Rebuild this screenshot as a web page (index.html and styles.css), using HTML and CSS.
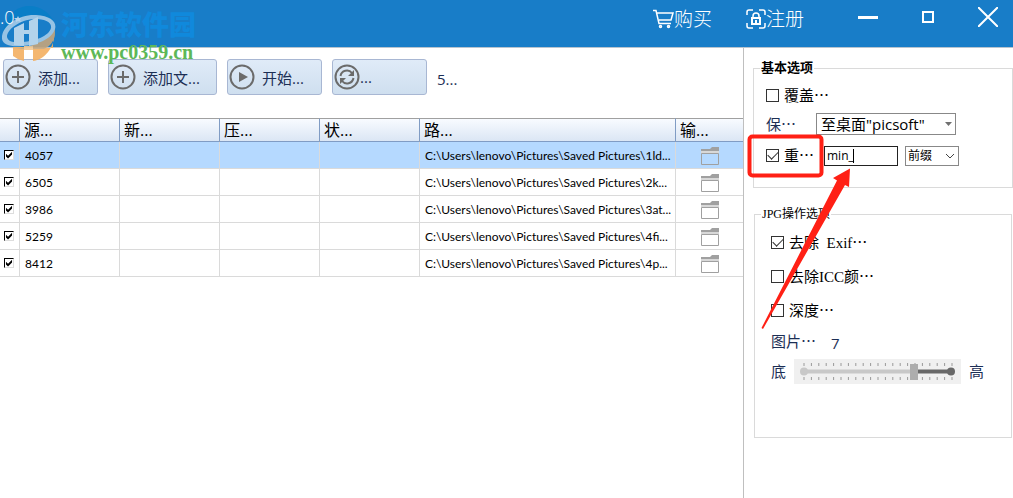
FILE: index.html
```html
<!DOCTYPE html>
<html lang="zh-CN">
<head>
<meta charset="utf-8">
<title>图片压缩</title>
<link rel="stylesheet" href="styles.css">
</head>
<body>
<div class="app">
  <header class="titlebar">
    <span class="version">.0</span>
    <nav class="account">
      <button class="title-btn" type="button">
        <svg width="21" height="20" viewBox="0 0 21 20" fill="none" stroke="#fff" stroke-width="1.5"><path d="M0 1.500h3l3 13h12M4 4h16l-2 7H6"/><circle cx="7.500" cy="17.500" r="1"/><circle cx="15.500" cy="17.500" r="1"/></svg>购买
      </button>
      <button class="title-btn" type="button">
        <svg width="20" height="20" viewBox="0 0 20 20" fill="none" stroke="#fff" stroke-width="1.500"><path d="M1 6V3q0-2 2-2h4M13 1h4q2 0 2 2v3M19 14v3q0 2-2 2h-4M7 19H3q-2 0-2-2v-3"/><path d="M7 9V7a3 3 0 0 1 6 0v2"/><path d="M6 9h8v6H6zM10 11v3" stroke-width="2"/></svg>注册
      </button>
    </nav>
    <div class="window-controls">
      <button class="win-btn" type="button" aria-label="最小化"><svg width="20" height="20" viewBox="0 0 20 20"><path d="M0 10.500h20" stroke="#fff" stroke-width="3"/></svg></button>
      <button class="win-btn" type="button" aria-label="最大化"><svg width="12" height="12" viewBox="0 0 12 12"><path d="M1 1h10v10H1z" fill="none" stroke="#fff" stroke-width="2"/></svg></button>
      <button class="win-btn" type="button" aria-label="关闭"><svg width="20" height="20" viewBox="0 0 20 20"><path d="M0 0l20 20M20 0L0 20" stroke="#fff" stroke-width="2"/></svg></button>
    </div>
  </header>

  <div class="content">
    <main class="files">
      <div class="toolbar">
        <button class="tool" type="button"><svg class="tool-icon" viewBox="0 0 26 26"><circle cx="13" cy="13" r="11.500"/><path d="M13 7v12M7 13h12"/></svg>添加...</button>
        <button class="tool tool-wide" type="button"><svg class="tool-icon" viewBox="0 0 26 26"><circle cx="13" cy="13" r="11.500"/><path d="M13 7v12M7 13h12"/></svg>添加文...</button>
        <button class="tool" type="button"><svg class="tool-icon" viewBox="0 0 26 26"><circle cx="13" cy="13" r="11.500"/><path d="M10 8l9 5-9 5z" fill="#6b6b6b" stroke="none"/></svg>开始...</button>
        <button class="tool tool-tight" type="button"><svg class="tool-icon" viewBox="0 0 26 26"><circle cx="13" cy="13" r="11.500"/><path d="M6.500 12a6.500 6.500 0 0 1 11.500-3M19.500 14A6.500 6.500 0 0 1 8 17"/><path d="M20 6v6h-6zM6 20v-6h6z" fill="#6b6b6b" stroke="none"/></svg>...</button>
        <span class="count">5...</span>
      </div>
      <table class="grid">
        <colgroup><col class="c-check"><col class="c-std"><col class="c-std"><col class="c-std"><col class="c-std"><col class="c-path"><col></colgroup>
        <thead><tr><th></th><th>源...</th><th>新...</th><th>压...</th><th>状...</th><th>路...</th><th>输...</th></tr></thead>
        <tbody>
          <tr class="selected"><td><input class="row-check" type="checkbox" aria-label="4057" checked></td><td>4057</td><td></td><td></td><td></td><td>C:\Users\lenovo\Pictures\Saved Pictures\1ld...</td><td class="out"><svg width="18" height="18" viewBox="0 0 18 18"><path d="M0 2h9l2-2h7v4H0z" fill="#a0a0a0"/><path d="M0 4h18v2H0z" fill="#d8d8d8"/><path d="M.5 6.500h17v11H.5z" fill="none" stroke="#a0a0a0"/></svg></td></tr>
          <tr><td><input class="row-check" type="checkbox" aria-label="6505" checked></td><td>6505</td><td></td><td></td><td></td><td>C:\Users\lenovo\Pictures\Saved Pictures\2k...</td><td class="out"><svg width="18" height="18" viewBox="0 0 18 18"><path d="M0 2h9l2-2h7v4H0z" fill="#a0a0a0"/><path d="M0 4h18v2H0z" fill="#d8d8d8"/><path d="M.5 6.500h17v11H.5z" fill="none" stroke="#a0a0a0"/></svg></td></tr>
          <tr><td><input class="row-check" type="checkbox" aria-label="3986" checked></td><td>3986</td><td></td><td></td><td></td><td>C:\Users\lenovo\Pictures\Saved Pictures\3at...</td><td class="out"><svg width="18" height="18" viewBox="0 0 18 18"><path d="M0 2h9l2-2h7v4H0z" fill="#a0a0a0"/><path d="M0 4h18v2H0z" fill="#d8d8d8"/><path d="M.5 6.500h17v11H.5z" fill="none" stroke="#a0a0a0"/></svg></td></tr>
          <tr><td><input class="row-check" type="checkbox" aria-label="5259" checked></td><td>5259</td><td></td><td></td><td></td><td>C:\Users\lenovo\Pictures\Saved Pictures\4fi...</td><td class="out"><svg width="18" height="18" viewBox="0 0 18 18"><path d="M0 2h9l2-2h7v4H0z" fill="#a0a0a0"/><path d="M0 4h18v2H0z" fill="#d8d8d8"/><path d="M.5 6.500h17v11H.5z" fill="none" stroke="#a0a0a0"/></svg></td></tr>
          <tr><td><input class="row-check" type="checkbox" aria-label="8412" checked></td><td>8412</td><td></td><td></td><td></td><td>C:\Users\lenovo\Pictures\Saved Pictures\4p...</td><td class="out"><svg width="18" height="18" viewBox="0 0 18 18"><path d="M0 2h9l2-2h7v4H0z" fill="#a0a0a0"/><path d="M0 4h18v2H0z" fill="#d8d8d8"/><path d="M.5 6.500h17v11H.5z" fill="none" stroke="#a0a0a0"/></svg></td></tr>
        </tbody>
      </table>
    </main>

    <aside class="options">
      <fieldset class="group basic">
        <legend>基本选项</legend>
        <label class="check-row"><input class="check" type="checkbox"><span>覆盖<span class="dots">…</span></span></label>
        <div class="save-row">
          <label class="caption" for="save">保<span class="dots">…</span></label>
          <div class="select-wrap save-wrap">
            <select class="select select-save" id="save"><option>至桌面"picsoft"</option></select>
            <svg class="caret" width="7" height="4" viewBox="0 0 7 4"><path d="M0 0h7L3.500 4z" fill="#707070"/></svg>
          </div>
        </div>
        <div class="rename-row">
          <label class="check-row"><input class="check" type="checkbox" checked><span>重<span class="dots">…</span></span></label>
          <div class="prefix-wrap"><input class="prefix" type="text" value="min_" aria-label="名称"><i class="cursor"></i></div>
          <div class="select-wrap">
            <select class="select select-kind" aria-label="位置"><option>前缀</option></select>
            <svg class="caret" width="10" height="6" viewBox="0 0 10 6"><path d="M1 1l4 4 4-4" fill="none" stroke="#444"/></svg>
          </div>
        </div>
      </fieldset>

      <fieldset class="group jpg">
        <legend>JPG操作选项</legend>
        <label class="check-row"><input class="check" type="checkbox" checked><span>去除&nbsp; Exif<span class="dots">…</span></span></label>
        <label class="check-row"><input class="check" type="checkbox"><span>去除ICC颜<span class="dots">…</span></span></label>
        <label class="check-row"><input class="check" type="checkbox"><span>深度<span class="dots">…</span></span></label>
        <div class="quality"><label for="quality">图片<span class="dots">…</span></label><output class="quality-value" for="quality">7</output></div>
        <div class="slider-row">
          <span>底</span>
          <div class="slider">
            <svg class="track" viewBox="0 0 167 25">
              <path d="M9.500 5.500h149M9.500 19.500h149" stroke="#999" stroke-width="3" stroke-dasharray="1 6.400"/>
              <path d="M10 12.500h110" stroke="#c8c8c8" stroke-width="4"/><path d="M120 12.500h37" stroke="#686868" stroke-width="4"/>
              <circle cx="10" cy="12.500" r="4" fill="#c8c8c8"/><circle cx="157" cy="12.500" r="4" fill="#686868"/>
            </svg>
            <input class="range" id="quality" type="range" min="0" max="20" value="15">
          </div>
          <span>高</span>
        </div>
      </fieldset>
    </aside>
  </div>

  <div class="watermark">
    <svg class="mark-logo" width="58" height="58" viewBox="0 0 58 58">
      <path d="M3 27C6 10 17 1 29 1c12 0 21 7 25 16C46 8 30 8 18 14 10 18 6 22 3 27z" fill="#087fc7"/>
      <path d="M53 18C59 36 47 55 33 56V43h20z" fill="#f3b062"/>
      <path d="M13 42h11v14q-6-1-11-5z" fill="#f3b062"/>
      <path d="M54 22c3 10-2 19-10 22H10c20 0 36-8 44-22z" fill="#c5a67c"/>
      <path d="M24 41h9v4h-9z" fill="#f3c994"/>
      <path d="M2 34C1 20 20 9 36 10c15 1 21 7 19 14-3 10-18 16-33 17-11 1-19-1-20-7zm5-2c1 5 8 6 16 5 12-1 26-6 28-14 1-6-6-9-17-9C20 15 7 24 7 32z" fill="#a5cbe8" fill-rule="evenodd"/>
      <path d="M14 23l10-5v23l-10-1zM29 16l9-4v27l-9 2z" fill="#c4ddef"/>
      <path d="M24 25h5v4h-5z" fill="#c4ddef"/>
      <path d="M18 11l1 2h2l-1 2 1 2-3-1-2 1v-2l-2-2h3z" fill="#c8def0"/>
    </svg>
    <div class="mark-text"><span class="mark-name">河东软件园</span><span class="mark-url">www.pc0359.cn</span></div>
  </div>

  <svg class="annotation" width="110" height="200" viewBox="745 132 110 200">
    <rect x="749.500" y="136.500" width="72" height="39" rx="3" fill="none" stroke="#ff2015" stroke-width="4"/>
    <path d="M850 168.500L833 178l4 2.500L761.500 328l1.500 1L845 185l4 2z" fill="#ff2015"/>
  </svg>
</div>
</body>
</html>
```
FILE: styles.css
```css
* { box-sizing: border-box; }

body {
  margin: 0;
  background: #fff;
  color: #000;
  font-family: "Open Sans", "Noto Sans CJK SC", sans-serif;
  font-size: 12px;
}

button, input, select { font: inherit; }

.app {
  position: relative;
  display: flex;
  flex-direction: column;
  min-height: 100vh;
  overflow: hidden;
}

.titlebar {
  display: flex;
  align-items: flex-start;
  height: 48px;
  background: #187dc8;
  border-bottom: 1px solid #b8c4cf;
  color: #fff;
}

.version {
  position: relative;
  z-index: 1;
  flex: 1;
  font-size: 18px;
  font-weight: 300;
  line-height: 34px;
}

.account { display: flex; gap: 34px; padding-right: 54px; }

.title-btn {
  display: flex;
  align-items: center;
  height: 38px;
  padding: 0;
  border: 0;
  background: none;
  color: #fff;
  font-size: 19px;
  font-weight: 300;
  line-height: 38px;
}

.window-controls { display: flex; gap: 44px; padding-right: 15px; }

.win-btn {
  display: flex;
  align-items: center;
  height: 34px;
  padding: 0;
  border: 0;
  background: none;
}

.content { display: flex; flex: 1; }

.files { flex: 1; min-width: 0; }

.toolbar {
  display: flex;
  gap: 10px;
  padding: 11px 3px 19px;
}

.tool {
  display: flex;
  align-items: center;
  gap: 7px;
  width: 95px;
  height: 36px;
  padding: 0 1px;
  border: 1px solid #a8b7d3;
  border-radius: 3px;
  background: linear-gradient(#e0ebf8, #cfdfef);
  color: #1c2f55;
  font-size: 15px;
  white-space: nowrap;
}

.tool-wide { width: 109px; }
.tool-tight { gap: 0; }

.tool-icon {
  flex: none;
  width: 26px;
  height: 26px;
  fill: none;
  stroke: #6b6b6b;
  stroke-width: 2;
}

.count { color: #1c2f55; font-size: 15px; line-height: 40px; }

.grid {
  width: 100%;
  border-collapse: separate;
  border-spacing: 0;
  table-layout: fixed;
}

.c-check { width: 20px; }
.c-std { width: 100px; }
.c-path { width: 256px; }

.grid th {
  height: 24px;
  padding: 0 4px;
  border-top: 1px solid #a0a0a0;
  border-bottom: 1px solid #809cc4;
  border-right: 1px solid #809cc4;
  background: linear-gradient(#f8fbff, #dbe6f4);
  font-size: 16px;
  font-weight: 400;
  line-height: 22px;
  text-align: left;
}

.grid td {
  height: 27px;
  padding: 1px 5px 0;
  border-right: 1px solid #dadada;
  border-bottom: 1px solid #dadada;
  font-family: Lato, sans-serif;
  line-height: 24px;
  white-space: nowrap;
}

.grid th:last-child, .grid td:last-child { border-right: 0; }

.grid .selected td { background: #b5d9ff; }

.grid td:first-child { padding: 0 4px; }

.grid .out { text-align: center; }

.out svg { display: block; margin: 0 auto; }

.row-check {
  appearance: none;
  display: block;
  width: 10px;
  height: 10px;
  margin: 0;
  border: 1px solid #000;
  border-right-color: #ddd;
  border-bottom-color: #ddd;
  background: #fff;
}

.row-check:checked::before {
  content: "";
  display: block;
  width: 8px;
  height: 8px;
  background: #000;
  clip-path: polygon(12% 35%, 38% 60%, 88% 10%, 88% 45%, 38% 95%, 12% 70%);
}

.options {
  width: 270px;
  padding: 11px 0 0 9px;
  border-left: 1px solid #bfbfbf;
  font-family: "Liberation Serif", "Noto Sans CJK SC", serif;
  font-size: 15px;
}

.group {
  min-width: 0;
  margin: 0;
  border: 1px solid #dadada;
}

.group legend { padding: 0 1px; line-height: 18px; }

.dots { font-family: "Noto Sans CJK SC", sans-serif; }

.check-row { display: flex; align-items: center; gap: 5px; line-height: 20px; }

.check {
  appearance: none;
  display: grid;
  place-items: center;
  width: 13px;
  height: 13px;
  margin: 0;
  border: 1px solid #333;
  background: #fff;
}

.check:checked::before {
  content: "";
  width: 9px;
  height: 5px;
  margin-bottom: 3px;
  border-left: 1px solid #333;
  border-bottom: 1px solid #333;
  transform: rotate(-45deg);
}

.basic { height: 129px; padding: 8px 12px 0; }

.basic legend { margin-left: -6px; font-size: 13px; font-weight: 700; }

.save-row { display: flex; align-items: center; margin-top: 7px; }

.caption { width: 50px; color: #1c2f55; line-height: 20px; }

.select-wrap { display: grid; align-items: center; }

.select-wrap > * { grid-area: 1 / 1; }

.select {
  appearance: none;
  border: 1px solid #888;
  border-radius: 0;
  background: #fff;
  color: #000;
}

.select-save {
  width: 140px;
  height: 22px;
  padding: 0 4px;
  font-family: "Open Sans", "Noto Sans CJK SC", sans-serif;
  font-size: 15px;
  line-height: 20px;
}

.select-kind { width: 54px; height: 20px; padding: 0 2px; font-size: 12px; }

.caret { justify-self: end; margin-right: 4px; pointer-events: none; }

.rename-row { display: flex; align-items: center; margin-top: 10px; }

.rename-row .check-row { width: 58px; }

.prefix-wrap { display: grid; align-items: center; margin-right: 7px; }

.prefix-wrap > * { grid-area: 1 / 1; }

.prefix {
  width: 74px;
  height: 20px;
  padding: 0 2px;
  border: 1px solid #222;
  font-family: "Open Sans", sans-serif;
  font-size: 12px;
}

.cursor { width: 1px; height: 14px; margin-left: 29px; background: #000; }

.jpg { height: 233px; margin: 17px 1px 0; padding: 9px 16px 0; }

.jpg legend { margin-left: -10px; font-size: 12px; }

.jpg .check-row { margin-bottom: 13px; }

.quality { display: flex; gap: 15px; margin-top: -3px; color: #1c2f55; line-height: 20px; }

.quality-value { font-family: "Open Sans", sans-serif; line-height: 24px; }

.slider-row { display: flex; align-items: center; gap: 8px; margin-top: 4px; color: #1c2f55; line-height: 20px; }

.slider {
  display: grid;
  width: 167px;
  height: 25px;
  background: #f0f0f0;
}

.slider > * { grid-area: 1 / 1; width: 100%; height: 25px; }

.range {
  appearance: none;
  margin: 0;
  padding: 0 6px;
  background: none;
}

.range::-webkit-slider-thumb {
  appearance: none;
  width: 8px;
  height: 16px;
  background: #adadad;
}

.watermark {
  position: absolute;
  top: 5px;
  left: 0;
  display: flex;
  gap: 3px;
  pointer-events: none;
}

.mark-logo { opacity: 0.9; }

.mark-text { display: flex; flex-direction: column; }

.mark-name {
  color: #1089dc;
  font-family: "Noto Sans CJK SC", sans-serif;
  font-size: 27px;
  font-weight: 900;
  line-height: 38px;
}

.mark-url {
  color: #5db858;
  font-family: "Liberation Serif", serif;
  font-size: 20px;
  font-weight: 700;
  line-height: 18px;
}

.annotation {
  position: absolute;
  top: 132px;
  left: calc(100% - 268px);
  pointer-events: none;
}
```
